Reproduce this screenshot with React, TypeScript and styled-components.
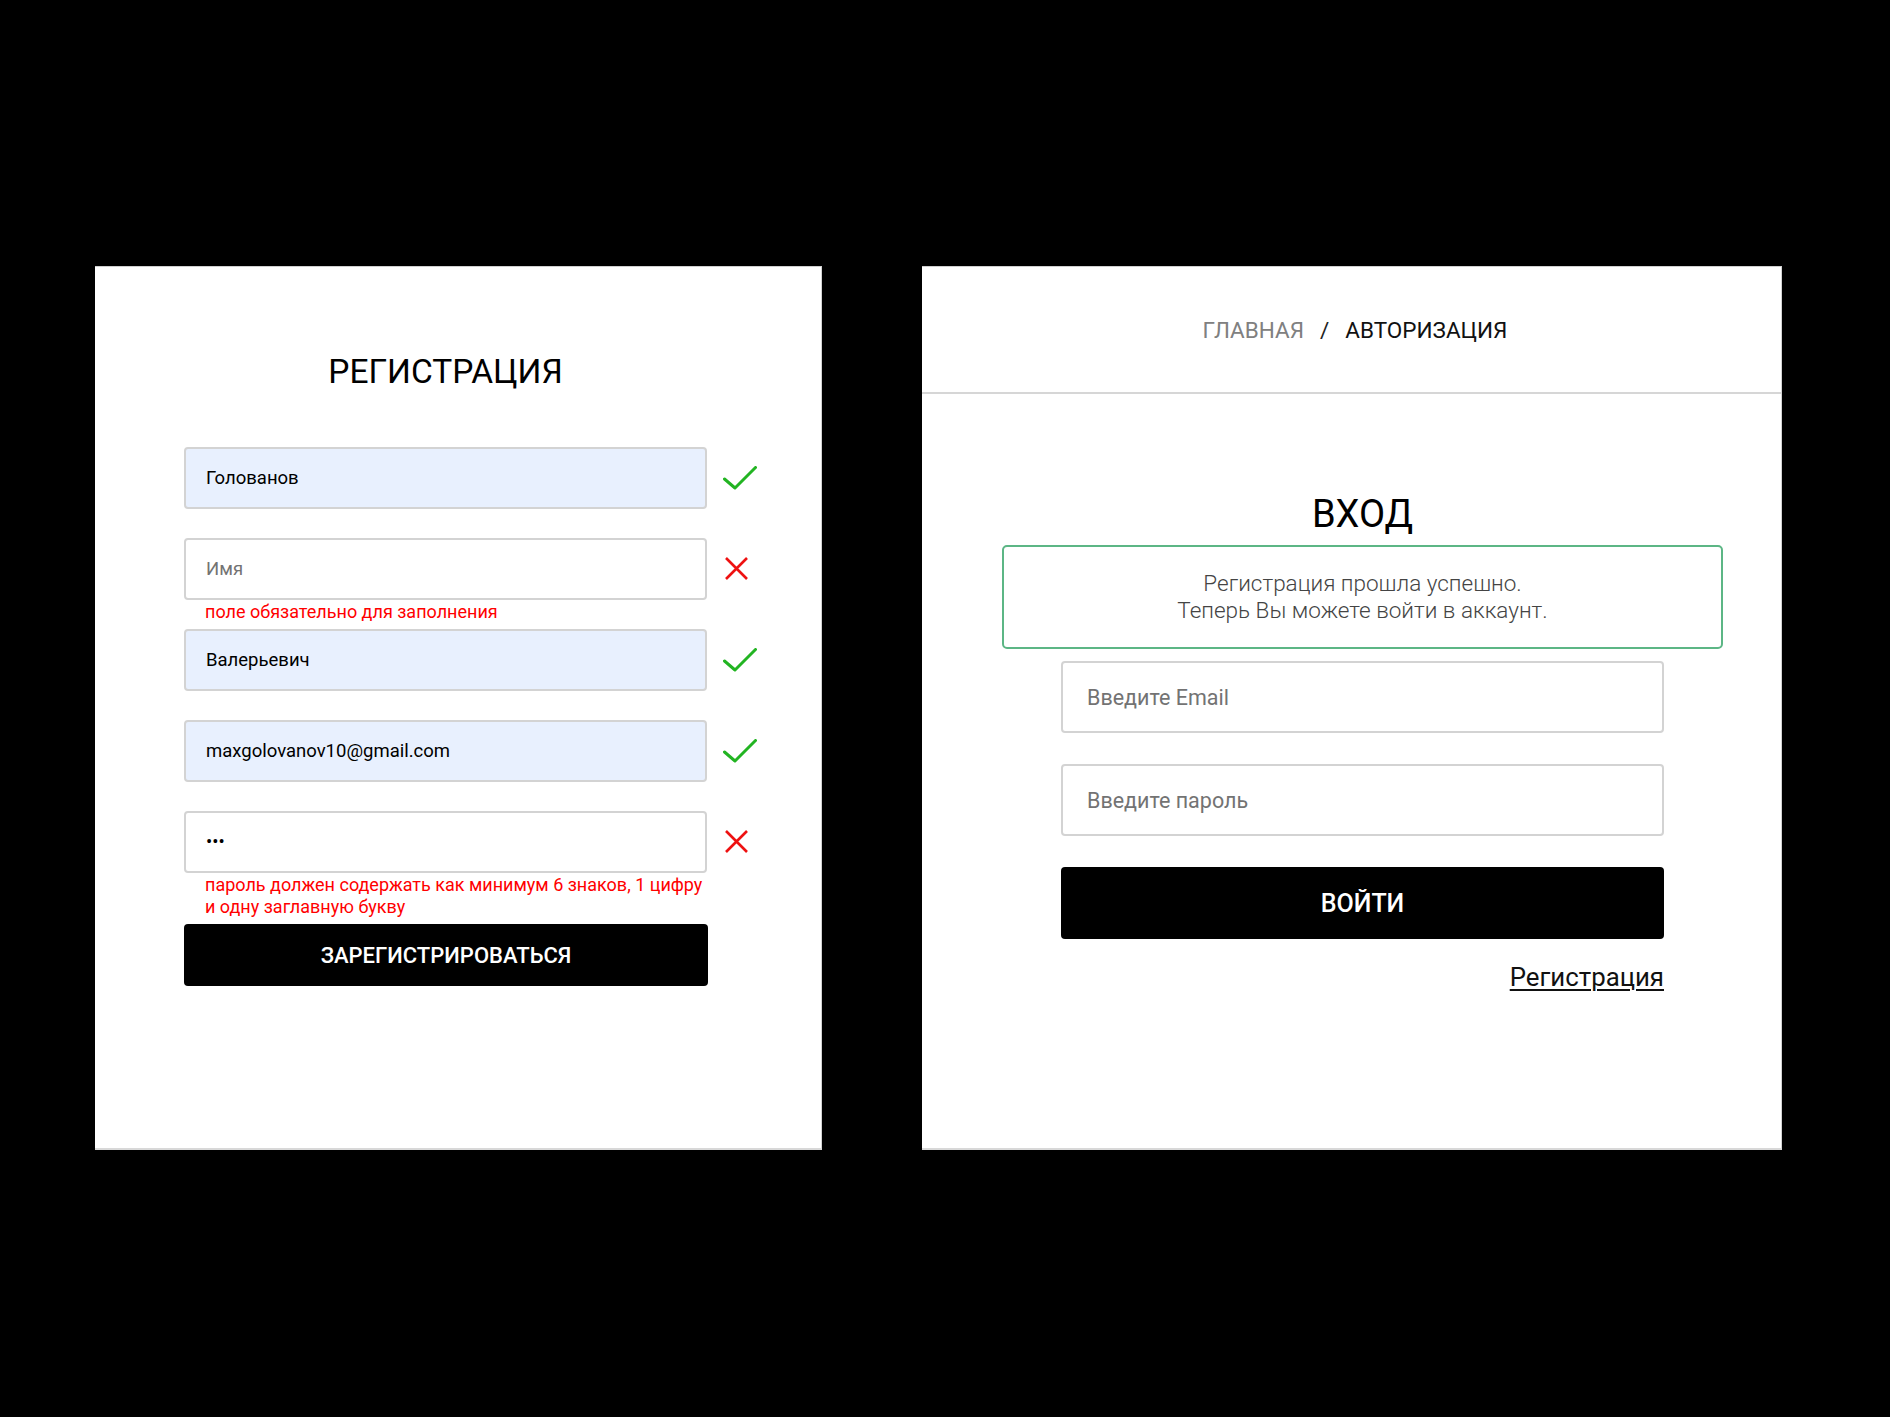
import React from 'react';
import styled, { createGlobalStyle } from 'styled-components';

const GlobalStyle = createGlobalStyle`
  html, body { margin: 0; padding: 0; background: #000; }
  body { font-family: Roboto, "Noto Sans", "Liberation Sans", Arial, sans-serif; }
  * { box-sizing: border-box; }
`;

const Stage = styled.div`
  display: flex;
  align-items: flex-start;
  gap: 100px;
  padding: 266px 0 0 95px;
  min-height: 1417px;
  background: #000;
`;

const Panel = styled.section<{ $w: number }>`
  width: ${p => p.$w}px;
  height: 884px;
  background: #fff;
  border-top: 1px solid #cfcfcf;
  border-bottom: 2px solid #d8d8d8;
  border-right: 1px solid #d2d2d2;
  display: flex;
  flex-direction: column;
`;

/* ---------- Registration ---------- */

const RegForm = styled.div`
  margin-left: 89px;
  padding-top: 84px;
  width: 573px;
`;

const Title = styled.h1<{ $size: number }>`
  margin: 0;
  font-family: Roboto, "Noto Sans", sans-serif;
  font-weight: 400;
  font-size: ${p => p.$size}px;
  line-height: 42px;
  color: #000;
  text-align: center;
`;

const RegTitle = styled(Title)`
  width: 523px;
  margin-bottom: 54px;
`;

const Field = styled.div<{ $hasError: boolean }>`
  display: grid;
  grid-template-columns: 523px 34px;
  column-gap: 16px;
  align-items: center;
  margin-bottom: ${p => (p.$hasError ? 0 : 29)}px;
`;

const TextInput = styled.input<{ $filled?: boolean; $h: number; $fs: number; $pad: number }>`
  display: block;
  width: 100%;
  height: ${p => p.$h}px;
  border: 2px solid #d3d3d3;
  border-radius: 4px;
  padding: 0 ${p => p.$pad}px;
  background: ${p => (p.$filled ? '#e8f0fe' : '#fff')};
  font-family: Roboto, "Noto Sans", sans-serif;
  font-size: ${p => p.$fs}px;
  color: #000;
  outline: none;
  &::placeholder { color: #737373; opacity: 1; }
`;

const IconBox = styled.div`
  width: 34px;
  height: 24px;
  display: flex;
  align-items: center;
`;

const ErrorText = styled.div`
  grid-column: 1 / span 2;
  padding: 1px 42px 6px 21px;
  font-size: 18px;
  line-height: 22px;
  color: #f00;
`;

const BlackButton = styled.button<{ $h: number; $fs: number }>`
  display: block;
  width: 100%;
  height: ${p => p.$h}px;
  border: none;
  border-radius: 4px;
  background: #000;
  color: #fff;
  font-family: Roboto, "Noto Sans", sans-serif;
  font-size: ${p => p.$fs}px;
  font-weight: 500;
  text-transform: uppercase;
  cursor: pointer;
`;

const RegButton = styled(BlackButton)`
  width: 524px;
`;

const CheckIcon = () => (
  <svg width="34" height="24" viewBox="0 0 34 24">
    <polyline points="1.5,13 12,22 32.5,1.5" fill="none" stroke="#22b422" strokeWidth="3" strokeLinecap="round" strokeLinejoin="round" />
  </svg>
);

const CrossIcon = () => (
  <svg width="34" height="24" viewBox="0 0 34 24">
    <path d="M3 1 L24 22 M24 1 L3 22" fill="none" stroke="#ee1111" strokeWidth="2.6" />
  </svg>
);

type RegFieldProps = {
  value?: string;
  placeholder?: string;
  type?: string;
  ok: boolean;
  error?: string;
};

const RegField = ({ value, placeholder, type = 'text', ok, error }: RegFieldProps) => (
  <Field $hasError={!!error}>
    <TextInput
      type={type}
      readOnly
      value={value ?? ''}
      placeholder={placeholder}
      $filled={ok}
      $h={62}
      $fs={18.5}
      $pad={20}
    />
    <IconBox>{ok ? <CheckIcon /> : <CrossIcon />}</IconBox>
    {error && <ErrorText>{error}</ErrorText>}
  </Field>
);

/* ---------- Login ---------- */

const Header = styled.header`
  height: 127px;
  border-bottom: 2px solid #d6d6d6;
  display: flex;
  align-items: center;
  justify-content: center;
  padding-left: 7px;
  font-size: 22.5px;
`;

const Crumb = styled.span<{ $active?: boolean }>`
  color: ${p => (p.$active ? '#111' : '#808080')};
`;

const Sep = styled.span`
  color: #222;
  margin: 0 16px 0 16px;
`;

const LoginBody = styled.div`
  padding: 99px 58px 0 80px;
  display: flex;
  flex-direction: column;
`;

const LoginTitle = styled(Title)`
  margin-bottom: 10px;
`;

const SuccessBox = styled.div`
  border: 2px solid #5cb685;
  border-radius: 5px;
  padding: 23px 10px;
  text-align: center;
  font-size: 22.5px;
  font-weight: 300;
  line-height: 27px;
  color: #444;
  margin-bottom: 12px;
`;

const LoginForm = styled.form`
  width: 603px;
  margin: 0 auto;
  display: flex;
  flex-direction: column;
  gap: 31px;
`;

const LinkRow = styled.div`
  display: flex;
  justify-content: flex-end;
  margin-top: -8px;
`;

const RegLink = styled.a`
  font-size: 25.8px;
  line-height: 30px;
  color: #111;
  text-decoration: underline;
  text-underline-offset: 3px;
  text-decoration-thickness: 1.5px;
`;

export default function App() {
  return (
    <>
      <GlobalStyle />
      <Stage>
        <Panel $w={727}>
          <RegForm>
            <RegTitle $size={33.5}>РЕГИСТРАЦИЯ</RegTitle>
            <RegField value="Голованов" ok />
            <RegField placeholder="Имя" ok={false} error="поле обязательно для заполнения" />
            <RegField value="Валерьевич" ok />
            <RegField value="maxgolovanov10@gmail.com" ok />
            <RegField
              type="password"
              value="abc"
              ok={false}
              error="пароль должен содержать как минимум 6 знаков, 1 цифру и одну заглавную букву"
            />
            <RegButton $h={62} $fs={22}>Зарегистрироваться</RegButton>
          </RegForm>
        </Panel>

        <Panel $w={860}>
          <Header>
            <Crumb>ГЛАВНАЯ</Crumb>
            <Sep>/</Sep>
            <Crumb $active>АВТОРИЗАЦИЯ</Crumb>
          </Header>
          <LoginBody>
            <LoginTitle $size={38}>ВХОД</LoginTitle>
            <SuccessBox>
              Регистрация прошла успешно.
              <br />
              Теперь Вы можете войти в аккаунт.
            </SuccessBox>
            <LoginForm onSubmit={e => e.preventDefault()}>
              <TextInput readOnly placeholder="Введите Email" $h={72} $fs={21.5} $pad={24} />
              <TextInput readOnly type="password" placeholder="Введите пароль" $h={72} $fs={21.5} $pad={24} />
              <BlackButton type="button" $h={72} $fs={25}>Войти</BlackButton>
              <LinkRow>
                <RegLink href="#">Регистрация</RegLink>
              </LinkRow>
            </LoginForm>
          </LoginBody>
        </Panel>
      </Stage>
    </>
  );
}
